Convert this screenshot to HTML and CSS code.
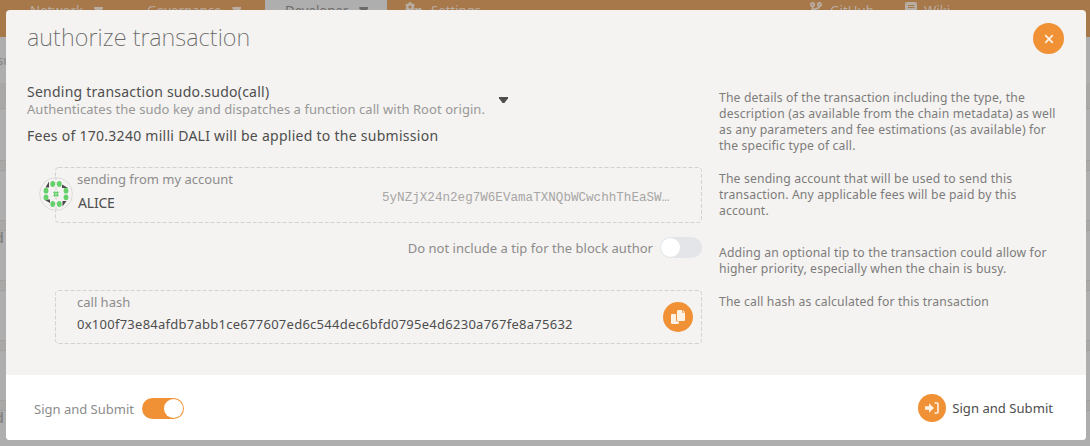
FILE: index.html
```html
<!DOCTYPE html>
<html lang="en">
<head>
<meta charset="utf-8">
<title>authorize transaction</title>
<link rel="stylesheet" href="styles.css">
</head>
<body>
<div class="page">
  <nav class="nav">
    <div class="tab network"><span>Network</span><i class="caret"></i></div>
    <div class="tab governance"><span>Governance</span><i class="caret"></i></div>
    <div class="tab developer"><span>Developer</span><i class="caret"></i></div>
    <div class="tab settings">
      <svg width="17" height="14" viewBox="0 0 17 14"><circle cx="5" cy="5" r="2.8" fill="none" stroke="currentColor" stroke-width="2.6"/><path d="M5 0v2M5 8v2M.7 2.5l1.6 1M7.7 6.5l1.6 1M.7 7.5l1.6-1M7.7 3.5l1.6-1" stroke="currentColor" stroke-width="2"/><path d="M10 6h2l1 1 1-1h2l1 3-2 3h-4z" fill="currentColor"/></svg>
      <span>Settings</span>
    </div>
    <div class="tab github">
      <svg width="12" height="14" viewBox="0 0 12 14" fill="none" stroke="currentColor" stroke-width="1.8"><circle cx="2.5" cy="2.5" r="1.6"/><circle cx="9.5" cy="2.5" r="1.6"/><path d="M2.5 4v7M9.5 4c0 4-7 2-7 5"/></svg>
      <span>GitHub</span>
    </div>
    <div class="tab wiki">
      <svg width="12" height="14" viewBox="0 0 12 14"><path d="M2 0h8q2 0 2 2v12H2q-2 0-2-2V2q0-2 2-2z" fill="currentColor"/><path d="M3 3.5h6.5M3 5.5h6.5" stroke="#a7784a" stroke-width="1"/></svg>
      <span>Wiki</span>
    </div>
  </nav>
  <div class="subnav">su</div>
  <div class="filter"></div>
  <div class="row"></div>
  <div class="row"></div>
  <div class="row"><b>d</b></div>
  <div class="row"></div>
  <div class="row"></div>
  <div class="row last"><b>d</b></div>
</div>

<div class="modal">
  <header class="head">
    <h1>authorize transaction</h1>
    <button class="round close" aria-label="close"><svg width="10" height="10" viewBox="0 0 10 10"><path d="M1.2 1.2l7.6 7.6M8.8 1.2L1.2 8.8" stroke="#fdf1e4" stroke-width="1.8"/></svg></button>
  </header>
  <main class="content">
    <section class="left">
      <div class="call">
        <div>
          <div class="call-name"><span>Sending transaction sudo.sudo(call)</span></div>
          <div class="call-doc"><span>Authenticates the sudo key and dispatches a function call with Root origin.</span></div>
        </div>
        <i class="caret dark"></i>
      </div>
      <div class="fees"><span>Fees of 170.3240 milli DALI will be applied to the submission</span></div>
      <div class="field account">
        <svg class="frame" width="647" height="56"><rect x=".5" y=".5" width="646" height="55" rx="3"/></svg>
        <svg class="identicon" width="34" height="34" viewBox="0 0 34 34">
          <circle cx="17" cy="17" r="16.4" fill="#f4f3f1" stroke="#dddcda"/>
          <path d="M17 0v34" stroke="#d2d1cf" stroke-dasharray="3 2"/>
          <g fill="#484848"><path d="M6.5 10.5L10 4.5V10.5zM23 7.5L29 11H23zM5 22.5H11V26zM23.5 24H27.5L23.5 29.5z"/></g>
          <g fill="#64d16b"><ellipse cx="13.7" cy="7" rx="2.4" ry="2.9"/><ellipse cx="20.3" cy="7" rx="2.4" ry="2.9"/><ellipse cx="13.7" cy="27" rx="2.4" ry="2.9"/><ellipse cx="20.3" cy="27" rx="2.4" ry="2.9"/><ellipse cx="7" cy="13.7" rx="2.4" ry="2.9"/><ellipse cx="27" cy="13.7" rx="2.4" ry="2.9"/><ellipse cx="7" cy="20.3" rx="2.4" ry="2.9"/><ellipse cx="27" cy="20.3" rx="2.4" ry="2.9"/></g>
          <path d="M15.7 14.3v5.4M18.3 14.3v5.4M14.3 15.7h5.4M14.3 18.3h5.4" stroke="#64d16b" stroke-width="1.3"/>
        </svg>
        <label><span>sending from my account</span></label>
        <div class="account-row"><span class="name">ALICE</span><span class="address">5yNZjX24n2eg7W6EVamaTXNQbWCwchhThEaSW…</span></div>
      </div>
      <div class="tip"><span>Do not include a tip for the block author</span><i class="toggle"></i></div>
      <div class="field hash">
        <svg class="frame" width="647" height="54"><rect x=".5" y=".5" width="646" height="53" rx="3"/></svg>
        <div>
          <label><span class="hash-label">call hash</span></label>
          <div class="hash-value"><span>0x100f73e84afdb7abb1ce677607ed6c544dec6bfd0795e4d6230a767fe8a75632</span></div>
        </div>
        <button class="round copy" aria-label="copy"><svg width="14" height="15" viewBox="0 0 14 15" fill="#fdf1e4"><path d="M1 4h4v6q0 1.5 1.5 1.5H8V13q0 1-1 1H1q-1 0-1-1V5q0-1 1-1z"/><path d="M7 0h4v2.8h3V10q0 1-1 1H7q-1 0-1-1V1q0-1 1-1zM11.7 0L14 2.2h-2.3z"/></svg></button>
      </div>
    </section>
    <aside class="notes">
      <p class="n1"><span>The details of the transaction including the type, the</span><br><span>description (as available from the chain metadata) as well</span><br><span>as any parameters and fee estimations (as available) for</span><br><span>the specific type of call.</span></p>
      <p class="n2"><span>The sending account that will be used to send this</span><br><span>transaction. Any applicable fees will be paid by this</span><br><span>account.</span></p>
      <p class="n3"><span>Adding an optional tip to the transaction could allow for</span><br><span>higher priority, especially when the chain is busy.</span></p>
      <p><span>The call hash as calculated for this transaction</span></p>
    </aside>
  </main>
  <footer class="foot">
    <div class="sign"><span>Sign and Submit</span><i class="toggle on"></i></div>
    <button class="submit"><i class="round sm"><svg width="14" height="12" viewBox="0 0 14 12"><path d="M0 4.2h4V1.2L9 6l-5 4.8v-3H0z" fill="#fdf1e4"/><path d="M9.5 1H12q1 0 1 1v8q0 1-1 1H9.5" fill="none" stroke="#fdf1e4" stroke-width="1.6"/></svg></i><span>Sign and Submit</span></button>
  </footer>
</div>
</body>
</html>
```
FILE: styles.css
```css
* { box-sizing: border-box; }
body {
  margin: 0;
  height: 446px;
  overflow: hidden;
  background: #aeaeae;
  font-family: "Noto Sans", sans-serif;
  font-size: 14px;
  color: #4e4e4e;
}
h1, p { margin: 0; font-weight: 400; }
button { border: 0; padding: 0; background: none; font: inherit; color: inherit; }
svg { display: block; flex: none; }
.page { height: 446px; overflow: hidden; }
.nav {
  display: grid;
  grid-template-columns: 145px 120px 122px 417px 96px 1fr;
  height: 37px;
  background: #a7784a;
  color: #b8ada3;
  font-size: 13.2px;
}
.tab { display: flex; gap: 9px; height: 37px; line-height: 20px; }
.tab svg { margin-top: 2px; }
.caret {
  width: 9px;
  height: 6px;
  margin-top: 7px;
  background: currentColor;
  clip-path: polygon(0 0, 100% 0, 100% 20%, 60% 100%, 40% 100%, 0 20%);
}
.tab .caret { margin-left: 2px; }
.network { padding-left: 30px; }
.governance { padding-left: 2px; }
.developer { background: #aeaeae; color: #6b6b6b; padding-left: 20px; }
.settings { padding-left: 18px; }
.github { padding-left: 6px; gap: 8px; }
.wiki { padding-left: 5px; gap: 7px; }
.subnav { height: 46px; padding-top: 14px; margin-left: -3px; font-size: 13px; color: #858585; }
.filter { height: 26px; margin-bottom: 2px; background: #a9a8a7; border-bottom: 1px solid #9f9f9f; }
.row { height: 60px; display: flex; flex-direction: column; justify-content: flex-end; color: #858585; }
.row::after {
  content: "";
  height: 9px;
  background: #a9a8a7;
  border: solid #a0a0a0;
  border-width: 1px 0;
  flex: none;
}
.row b { flex: 1; margin-left: -5px; line-height: 14px; }
.row.last { height: 35px; }
.row.last::after { display: none; }
.modal {
  position: absolute;
  left: 6px;
  top: 10px;
  width: 1080px;
  height: 430px;
  display: flex;
  flex-direction: column;
  border-radius: 4px;
  overflow: hidden;
  background: #f4f3f1;
}
.head { height: 68px; display: flex; justify-content: space-between; padding: 14px 22px 0 21px; }
h1 { font-size: 23.5px; line-height: 26px; font-weight: 200; letter-spacing: .1px; color: #666; }
.round {
  display: flex;
  align-items: center;
  justify-content: center;
  flex: none;
  width: 30px;
  height: 30px;
  border-radius: 50%;
  background: #f19135;
}
.close { width: 31px; height: 31px; margin-top: -1px; }
.content { display: grid; grid-template-columns: 675px 1fr; gap: 17px; height: 297px; padding: 0 21px; }
.call { display: flex; }
.call > div { width: 472px; }
.call-name { height: 24px; line-height: 24px; margin-top: 2px; letter-spacing: .24px; white-space: nowrap; }
.call-doc { height: 14px; line-height: 14px; font-size: 13px; letter-spacing: .06px; margin-top: -2px; margin-bottom: 1px; color: #989898; white-space: nowrap; }
.dark { margin-top: 19px; }
.fees { height: 22px; line-height: 22px; margin-top: 8px; letter-spacing: .27px; }
.field { position: relative; margin-left: 28px; width: 647px; padding-left: 22px; }
.frame { position: absolute; left: 0; top: 0; }
.frame rect { fill: none; stroke: #d2d1cf; stroke-dasharray: 4 2; }
.identicon { position: absolute; left: -16px; top: 10px; }
.account { height: 56px; margin-top: 20px; }
label { display: block; line-height: 18px; padding-top: 3px; color: #8c8c8c; font-size: 13px; }
.account-row { display: flex; line-height: 18px; margin-top: 6px; }
.name { width: 305px; padding-left: 1px; letter-spacing: -.2px; }
.address { font: 12.6px/16px "Liberation Mono", monospace; margin-top: -4px; color: #a7a6a5; }
.tip { display: flex; justify-content: flex-end; align-items: center; gap: 7px; height: 22px; margin-top: 13px; color: #8c8c8c; font-size: 13px; letter-spacing: .03px; }
.tip span { padding-top: 1px; }
.toggle { display: flex; width: 42px; height: 21px; padding: 1px; border-radius: 11px; background: #e3e5e8; }
.toggle::before { content: ""; width: 19px; height: 19px; border-radius: 50%; background: #fff; }
.toggle.on { background: #f19135; justify-content: flex-end; }
.hash { display: flex; justify-content: space-between; align-items: center; height: 54px; margin-top: 32px; padding-right: 9px; }
.hash > div { height: 54px; }
.hash-value { line-height: 20px; margin-top: 3px; font-size: 13px; letter-spacing: .26px; white-space: nowrap; }
.notes { padding-top: 12px; font-size: 12.2px; line-height: 16px; letter-spacing: .15px; color: #7d7c7b; white-space: nowrap; }
.notes p { margin-bottom: 17px; }
.notes .n2 { margin-bottom: 26px; }
.foot { height: 65px; display: flex; justify-content: space-between; padding: 18px 33px 0 28px; background: #fff; }
.sign { display: flex; align-items: center; gap: 8px; height: 31px; color: #8c8c8c; font-size: 13px; }
.submit { display: flex; align-items: center; gap: 6px; height: 30px; font-size: 13.1px; }
.sm { width: 28px; height: 28px; }
```
